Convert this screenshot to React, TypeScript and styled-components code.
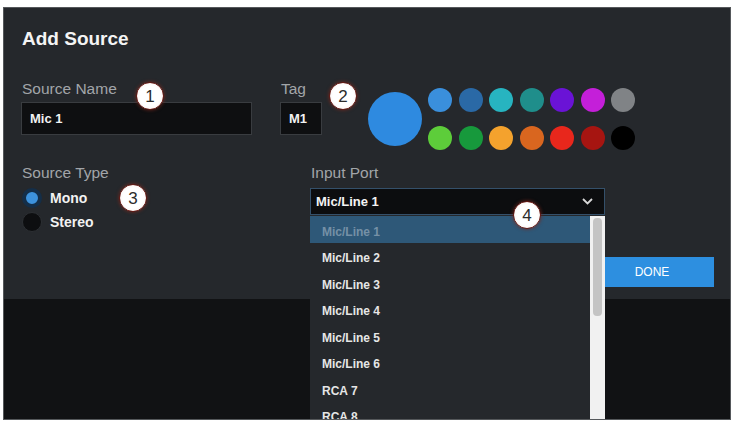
import React from "react";
import styled, { createGlobalStyle } from "styled-components";

const Global = createGlobalStyle`
  html, body { margin: 0; padding: 0; background: #ffffff; }
  body { font-family: "Liberation Sans", Arial, sans-serif; }
  * { box-sizing: border-box; }
`;

const Frame = styled.div`
  position: relative;
  margin: 7px 0 0 3px;
  width: 728px;
  height: 413px;
  border: 1px solid #55585b;
  background: #111214;
  overflow: hidden;
`;

const Panel = styled.div`
  display: flex;
  flex-direction: column;
  padding: 20px 16px 12px 17px;
  background: #25282c;
`;

const Title = styled.h1`
  margin: 0 0 0 1px;
  font-size: 19px;
  line-height: 22px;
  font-weight: 700;
  color: #f4f4f4;
`;

const Row = styled.div<{ $top: number }>`
  display: flex;
  align-items: flex-start;
  margin-top: ${(p) => p.$top}px;
`;

const Field = styled.div<{ $width: number; $left?: number }>`
  display: flex;
  flex-direction: column;
  width: ${(p) => p.$width}px;
  margin-left: ${(p) => p.$left ?? 0}px;
  position: relative;
`;

const Label = styled.div<{ $gap?: number }>`
  font-size: 15.5px;
  line-height: 18px;
  color: #a2a5a9;
  margin: 0 0 ${(p) => p.$gap ?? 4}px 1px;
`;

const TextBox = styled.div`
  height: 33px;
  display: flex;
  align-items: center;
  padding-left: 8px;
  background: #0e0f11;
  border: 1px solid #393c40;
  color: #f2f2f2;
  font-size: 13px;
  font-weight: 700;
`;

const Swatches = styled.div`
  display: flex;
  align-items: center;
  gap: 6px;
  margin: 8px 0 0 46px;
`;

const BigDot = styled.div<{ $color: string }>`
  width: 54px;
  height: 54px;
  border-radius: 50%;
  background: ${(p) => p.$color};
`;

const DotGrid = styled.div`
  display: grid;
  grid-template-columns: repeat(7, 24px);
  column-gap: 6.5px;
  row-gap: 14px;
`;

const Dot = styled.div<{ $color: string }>`
  width: 24px;
  height: 24px;
  border-radius: 50%;
  background: ${(p) => p.$color};
`;

const RadioList = styled.div`
  display: flex;
  flex-direction: column;
`;

const RadioItem = styled.div`
  display: flex;
  align-items: center;
  gap: 8px;
  height: 24px;
  margin-left: 1px;
  color: #f2f2f2;
  font-size: 14px;
  font-weight: 700;
`;

const RadioCircle = styled.span<{ $on?: boolean }>`
  width: 20px;
  height: 20px;
  border-radius: 50%;
  background: ${(p) => (p.$on ? "#3d92dc" : "#0d0e10")};
  border: ${(p) => (p.$on ? "4px solid #142e48" : "1px solid #2c2f33")};
`;

const SelectBox = styled.div`
  position: relative;
  height: 27px;
  display: flex;
  align-items: center;
  justify-content: space-between;
  padding: 0 11px 0 5px;
  background: #0c0d0f;
  border: 1px solid #34506a;
  color: #f4f4f4;
  font-size: 13px;
  font-weight: 700;
`;

const Dropdown = styled.div`
  position: absolute;
  top: calc(100% + 2px);
  left: -1px;
  width: 295px;
  height: 215px;
  display: flex;
  background: #25282c;
  z-index: 2;
`;

const OptionList = styled.div`
  flex: 1;
  display: flex;
  flex-direction: column;
`;

const Option = styled.div<{ $active?: boolean }>`
  flex: 0 0 26.5px;
  display: flex;
  align-items: center;
  padding: 5px 0 0 12px;
  font-size: 12px;
  font-weight: 700;
  color: ${(p) => (p.$active ? "#7590a6" : "#e6e6e6")};
  background: ${(p) => (p.$active ? "#2e5878" : "transparent")};
`;

const ScrollTrack = styled.div`
  position: relative;
  width: 15px;
  background: #f1f1f1;
`;

const ScrollThumb = styled.div`
  position: absolute;
  left: 3px;
  top: 2px;
  width: 9px;
  height: 98px;
  border-radius: 4px;
  background: #c4c4c4;
`;

const DoneButton = styled.button`
  align-self: flex-end;
  margin-top: 23px;
  width: 124px;
  height: 30px;
  border: none;
  background: #2d8fe0;
  color: #ffffff;
  font-family: "Liberation Sans", Arial, sans-serif;
  font-size: 12px;
  font-weight: 400;
`;

const Badge = styled.div<{ $x: number; $y: number }>`
  position: absolute;
  left: ${(p) => p.$x}px;
  top: ${(p) => p.$y}px;
  width: 28px;
  height: 28px;
  border-radius: 50%;
  display: flex;
  align-items: center;
  justify-content: center;
  background: radial-gradient(circle, #ffffff 55%, #f3e9e6 100%);
  border: 1.5px solid #6a1a14;
  box-shadow: 0 0 3px 1px rgba(120, 40, 30, 0.55);
  color: #2c2c2c;
  font-size: 17px;
  line-height: 1;
  z-index: 5;
`;

const row1 = ["#3a8fdc", "#2a69a6", "#27b4c0", "#1f8e8b", "#6a13d6", "#c41fd9", "#808386"];
const row2 = ["#5dcd3a", "#17993c", "#f4a22d", "#d9661f", "#e8271c", "#a61511", "#000000"];
const ports = ["Mic/Line 1", "Mic/Line 2", "Mic/Line 3", "Mic/Line 4", "Mic/Line 5", "Mic/Line 6", "RCA 7", "RCA 8"];

const Chevron = () => (
  <svg width="11" height="7" viewBox="0 0 11 7">
    <polyline points="1,1 5.5,5.5 10,1" fill="none" stroke="#d8d8d8" strokeWidth="1.8" />
  </svg>
);

export default function App() {
  return (
    <>
      <Global />
      <Frame>
        <Panel>
          <Title>Add Source</Title>
          <Row $top={30}>
            <Field $width={231}>
              <Label>Source Name</Label>
              <TextBox>Mic 1</TextBox>
            </Field>
            <Field $width={42} $left={28}>
              <Label>Tag</Label>
              <TextBox>M1</TextBox>
            </Field>
            <Swatches>
              <BigDot $color="#2e8ae0" />
              <DotGrid>
                {[...row1, ...row2].map((c, i) => (
                  <Dot key={i} $color={c} />
                ))}
              </DotGrid>
            </Swatches>
          </Row>
          <Row $top={14}>
            <Field $width={289}>
              <Label>Source Type</Label>
              <RadioList>
                <RadioItem>
                  <RadioCircle $on />
                  Mono
                </RadioItem>
                <RadioItem>
                  <RadioCircle />
                  Stereo
                </RadioItem>
              </RadioList>
            </Field>
            <Field $width={295}>
              <Label $gap={6}>Input Port</Label>
              <SelectBox>
                Mic/Line 1
                <Chevron />
                <Dropdown>
                  <OptionList>
                    {ports.map((p, i) => (
                      <Option key={p} $active={i === 0}>
                        {p}
                      </Option>
                    ))}
                  </OptionList>
                  <ScrollTrack>
                    <ScrollThumb />
                  </ScrollTrack>
                </Dropdown>
              </SelectBox>
            </Field>
          </Row>
          <DoneButton>DONE</DoneButton>
        </Panel>
        <Badge $x={132} $y={74}>1</Badge>
        <Badge $x={325} $y={74}>2</Badge>
        <Badge $x={115} $y={176}>3</Badge>
        <Badge $x={509} $y={193}>4</Badge>
      </Frame>
    </>
  );
}
